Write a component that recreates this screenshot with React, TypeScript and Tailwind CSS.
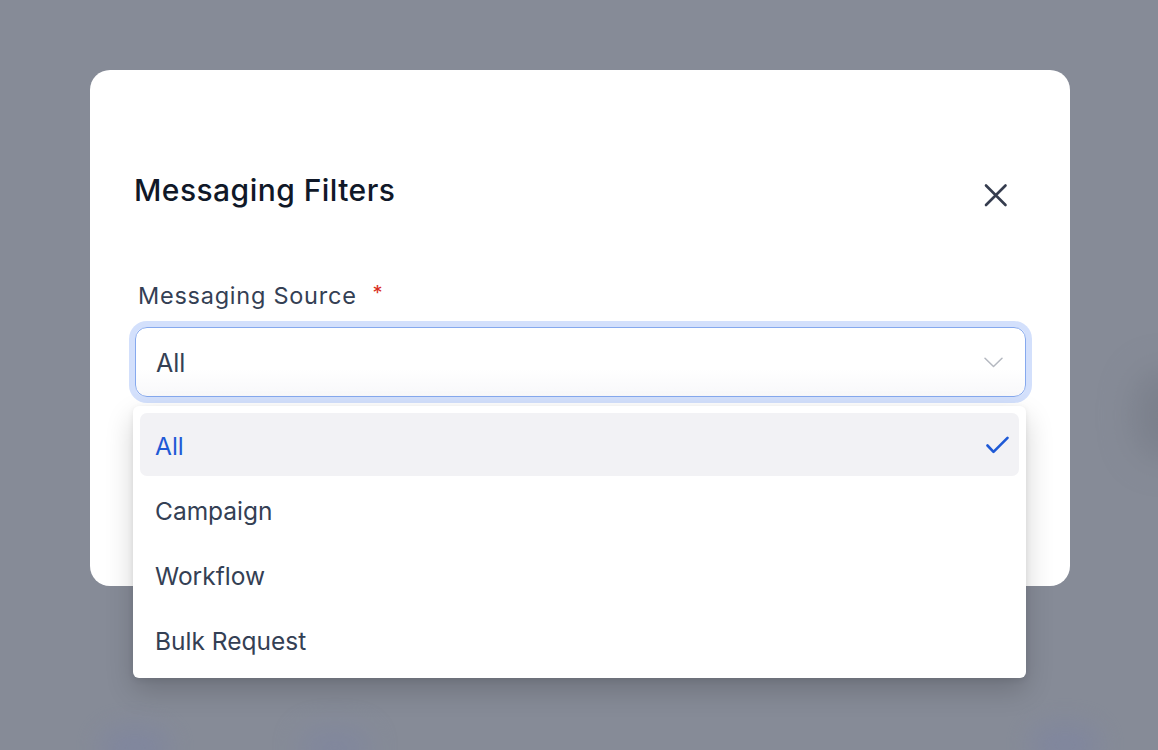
import React from "react";

const options = ["All", "Campaign", "Workflow", "Bulk Request"];

function CloseIcon() {
  return (
    <svg width="24" height="24" viewBox="0 0 24 24" fill="none">
      <path d="M2 2.5L21.5 22M21.5 2.5L2 22" stroke="#353c4e" strokeWidth="2.6" strokeLinecap="round" />
    </svg>
  );
}

function Chevron() {
  return (
    <svg width="19" height="11" viewBox="0 0 19 11" fill="none">
      <path d="M1 1.2L9.5 9.5L18 1.2" stroke="#b4b8c0" strokeWidth="1.5" strokeLinecap="round" strokeLinejoin="round" />
    </svg>
  );
}

function Check() {
  return (
    <svg width="23" height="18" viewBox="0 0 23 18" fill="none">
      <path d="M1.5 9.5L7.5 15.8L21.5 1.8" stroke="#1f5ad6" strokeWidth="2.6" strokeLinecap="round" strokeLinejoin="round" />
    </svg>
  );
}

export default function App() {
  return (
    <div
      className="relative w-[1158px] h-[750px] overflow-hidden bg-[#868b97] pt-[70px] pl-[90px]"
      style={{ fontFamily: "Inter, 'Noto Sans', sans-serif" }}
    >
      {/* soft blurred shapes of the page behind the overlay */}
      <div className="absolute left-[100px] top-[728px] w-[70px] h-[40px] rounded-full bg-[#7c83a3] blur-[14px] opacity-60" />
      <div className="absolute left-[300px] top-[728px] w-[70px] h-[40px] rounded-full bg-[#7c83a3] blur-[14px] opacity-50" />
      <div className="absolute left-[1030px] top-[725px] w-[70px] h-[40px] rounded-full bg-[#7c83a3] blur-[14px] opacity-60" />
      <div className="absolute left-[1135px] top-[370px] w-[60px] h-[90px] rounded-full bg-[#6e737e] blur-[18px] opacity-50" />

      <div className="relative w-[980px] h-[516px] rounded-[20px] bg-white">
        <div className="flex items-start justify-between pt-[102px] pl-[44px] pr-[62px]">
          <h2 className="text-[30px] leading-[36px] font-[450] text-[#101828] tracking-[0.45px]">
            Messaging Filters
          </h2>
          <button className="mt-[11px]" aria-label="Close">
            <CloseIcon />
          </button>
        </div>

        <div className="px-[45px] pr-[44px] pt-[74px]">
          <label className="flex items-start gap-[16px] pl-[3px] text-[23.5px] leading-[28px] text-[#344054] tracking-[0.75px]">
            <span>Messaging Source</span>
            <span className="text-[#d92d20] text-[20px] leading-[20px] mt-[1px]">*</span>
          </label>

          <div className="relative mt-[17px]">
            <div className="flex items-center justify-between h-[70px] rounded-[12px] border border-[#86a9ee] bg-gradient-to-b from-white from-60% to-[#f8f8fa] pl-[20px] pr-[22px] shadow-[0_0_0_6px_#d3e0fc]">
              <span className="text-[25px] leading-[30px] text-[#344054] mt-[1px]">All</span>
              <Chevron />
            </div>

            <div className="absolute left-[-2px] right-0 top-[79px] flex flex-col gap-[2px] rounded-[6px] bg-white p-[7px] shadow-[0_12px_28px_rgba(0,0,0,0.18),0_2px_6px_rgba(0,0,0,0.08)]">
              {options.map((o, i) => (
                <div
                  key={o}
                  className={
                    i === 0
                      ? "flex items-center justify-between h-[63px] rounded-[7px] bg-[#f2f2f5] pl-[15px] pr-[10px]"
                      : "flex items-center justify-between h-[63px] rounded-[7px] pl-[15px] pr-[10px]"
                  }
                >
                  <span
                    className={
                      i === 0
                        ? "text-[24.5px] leading-[30px] text-[#1f5ad6] mt-[2px]"
                        : "text-[24.5px] leading-[30px] text-[#344054] mt-[2px]"
                    }
                  >
                    {o}
                  </span>
                  {i === 0 && <Check />}
                </div>
              ))}
            </div>
          </div>
        </div>
      </div>
    </div>
  );
}
